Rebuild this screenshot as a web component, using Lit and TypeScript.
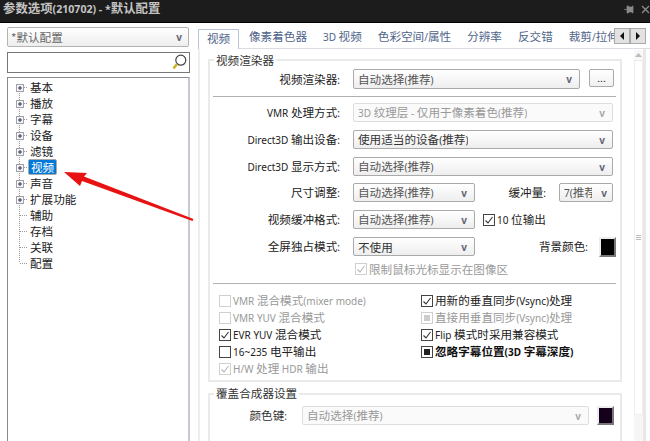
import { LitElement, html, css, svg } from "lit";
import { customElement } from "lit/decorators.js";

// Latin runs in the reference are visibly narrower than the CJK text beside them.
const t = (s: string) =>
  s.split(/([\x21-\x7e]+(?: [\x21-\x7e]+)*)/).map((p, i) => (i % 2 ? html`<span class="lat">${p}</span>` : p));

const TREE = [
  ["基本", 1], ["播放", 1], ["字幕", 1], ["设备", 1], ["滤镜", 1], ["视频", 1], ["声音", 1], ["扩展功能", 1],
  ["辅助", 0], ["存档", 0], ["关联", 0], ["配置", 0],
] as [string, number][];

const TABS = ["像素着色器", "3D 视频", "色彩空间/属性", "分辨率", "反交错", "裁剪/拉伸"];

const LEFT = [
  ["VMR 混合模式(mixer mode)", "off", true],
  ["VMR YUV 混合模式", "off", true],
  ["EVR YUV 混合模式", "on", false],
  ["16~235 电平输出", "off", false],
  ["H/W 处理 HDR 输出", "on", true],
] as [string, string, boolean][];

const RIGHT = [
  ["用新的垂直同步(Vsync)处理", "on", false, false],
  ["直接用垂直同步(Vsync)处理", "mixed", true, false],
  ["Flip 模式时采用兼容模式", "on", false, false],
  ["忽略字幕位置(3D 字幕深度)", "mixed", false, true],
] as [string, string, boolean, boolean][];

@customElement("app-root")
export class AppRoot extends LitElement {
  static styles = css`
    :host { display: block; width: 650px; height: 441px; overflow: hidden; position: relative; background: #fff;
      font: 11.6px/16px "Noto Sans CJK SC", "Noto Sans", sans-serif; color: #222; }
    .lat { font-family: "Noto Sans", sans-serif; font-size: 10px; }
    .title { background: #1c1c1c; border-bottom: 1px solid #000; display: flex; align-items: center;
      padding: 0 0 5px 3px; box-sizing: border-box; height: 23px; color: #c4c4c4; font-size: 12.4px; font-weight: 700;
      white-space: nowrap; }
    .title .lat { font-size: 10.6px; }
    .title .sp { flex: 1; }
    .title svg { display: block; }
    .main { display: flex; height: 418px; padding-top: 4px; }
    .left { width: 183px; margin-left: 7px; display: flex; flex-direction: column; flex: none; }
    .combo { height: 20px; border: 1px solid #b4b4b4; border-radius: 2px; background: linear-gradient(#fff, #eee);
      display: flex; align-items: center; box-sizing: border-box; padding: 0 6px 0 3px; color: #666; width: 182px; }
    .combo .sp { flex: 1; }
    .combo .v { font: 700 10px "Noto Sans", sans-serif; color: #667; }
    .search { height: 21px; margin-top: 5px; border: 1px solid #777; box-sizing: border-box; display: flex;
      justify-content: flex-end; align-items: center; padding-right: 2px; }
    .tree { flex: 1; margin-top: 4px; border-style: solid; border-color: #8a8a92 #c8c8d0 #c8c8d0 #8a8a92;
      border-width: 1px 2px 0 1px; padding-top: 1px; }
    .node { height: 16px; display: flex; align-items: center; }
    .node svg { flex: none; display: block; }
    .node span { padding: 0 2px; line-height: 15px; }
    .node .sel { background: #0078d7; color: #fff; display: block; }
    .right { flex: 1; margin-left: 8px; display: flex; flex-direction: column; min-width: 0; }
    .tabs { height: 21px; display: flex; align-items: flex-end; border-bottom: 1px solid #dcdce4; position: relative; }
    .tab0 { width: 41px; height: 20px; border: 1px solid #b9c4d8; border-bottom: 0; box-sizing: border-box;
      background: #fff; text-align: center; color: #50648a; line-height: 17px; margin-bottom: -1px; flex: none; }
    .tablist { display: flex; gap: 16px; margin-left: 10px; width: 365px; overflow: hidden; height: 20px;
      white-space: nowrap; color: #50648a; line-height: 17px; flex: none; }
    .tablist span { flex: none; }
    .arrows { display: flex; flex: none; align-self: flex-start; margin-top: 1px; }
    .arrows div { width: 16px; height: 16px; background: #e2e2e2; border: 1px solid #aaa; box-sizing: border-box;
      display: flex; align-items: center; justify-content: center; }
    .body { flex: 1; display: flex; border-left: 2px solid #eee; min-height: 0; }
    .page { width: 414px; margin-left: 8px; flex: none; }
    .group { border: 2px solid #eaeaea; padding: 0 4px 0 3px; box-sizing: border-box; }
    .g1 { margin-top: 10px; height: 323px; }
    .g2 { margin-top: 11px; height: 80px; }
    .legend { width: fit-content; background: #fff; margin: -9px 0 0 1px; padding: 0 2px; height: 16px; color: #333; }
    .g2 .legend { margin-top: -10px; }
    .row { height: 19px; display: flex; align-items: center; margin-top: 8px; }
    .row.first { margin-top: 1px; height: 20px; }
    .row.afterhr { margin-top: 6px; }
    .row.tight { margin-top: 7px; }
    .lbl { width: 127px; margin-right: 13px; text-align: right; flex: none; white-space: nowrap; color: #222; }
    .sel { height: 100%; box-sizing: border-box; border: 1px solid #aaa; border-radius: 2px;
      background: linear-gradient(#fff, #eee); display: flex; align-items: center; padding: 0 7px 0 4px; flex: none;
      color: #555; overflow: hidden; white-space: nowrap; justify-content: space-between; gap: 4px; }
    .sel .txt { overflow: hidden; min-width: 0; }
    .sel .v { font: 700 10px "Noto Sans", sans-serif; color: #667; flex: none; }
    .sel.dim { border-color: #dedede; background: #fafafa; color: #999; }
    .sel.dim .v { color: #aaa; }
    .sel.dark { color: #333; }
    .w260 { width: 260px; } .w227 { width: 227px; } .w122 { width: 122px; }
    .w54 { width: 54px; padding-right: 5px; gap: 9px; }
    .w287 { width: 287px; }
    .dots { width: 25px; height: 18px; margin-left: 9px; border: 1px solid #aaa; border-radius: 2px; box-sizing: border-box;
      background: linear-gradient(#fff, #f0f0f0); text-align: center; line-height: 16px; font-size: 10px; flex: none; align-self: flex-start; }
    .lbl2 { width: 71px; margin-right: 13px; text-align: right; flex: none; }
    .check { display: flex; align-items: center; gap: 2px; white-space: nowrap; }
    .check svg { flex: none; display: block; }
    .check.dis { color: #999; }
    .check.strong { font-weight: 700; color: #111; }
    .ten { margin-left: 8px; }
    .spacer { flex: 1; }
    .lbl3 { margin-right: 11px; }
    .swatch { width: 17px; height: 20px; box-sizing: border-box; border: 2px solid; border-color: #eee #777 #777 #eee;
      background: #000; flex: none; }
    .swatch.purple { background: #14001a; }
    .limit { margin: 5px 0 0 142px; height: 13px; }
    hr { border: 0; border-top: 1px solid #b0b0b0; margin: 7px 0 0; }
    .hr2 { margin-top: 9px; }
    .cols { display: grid; grid-template-columns: 202px 1fr; padding-left: 6px; margin-top: 8px; }
    .cols > div { display: flex; flex-direction: column; }
    .cols .check { height: 17px; }
    .g2 .lbl { width: 74px; margin-right: 15px; color: #333; }
    .g2 .row { margin-top: 5px; }
    .g2 .swatch { margin-left: 8px; height: 19px; }
    .scroll { width: 9px; margin-left: 12px; margin-top: 1px; flex: none; background: #f6f6f6; display: flex; flex-direction: column; }
    .up { height: 10px; background: #f8f8f8; display: flex; align-items: center; justify-content: center; border-bottom: 1px solid #eaeaea; }
    .thumb { height: 353px; background: #fff; border: 1px solid #eee; border-width: 0 1px 1px; display: flex; align-items: center; justify-content: center; }
    .strip { width: 3px; background: #e8e8e8; flex: none; }
    .arrow { position: absolute; left: 60px; top: 168px; pointer-events: none; }
  `;

  box(state: string, dis: boolean) {
    const b = dis ? "#d0d0d0" : "#444";
    const m = dis ? "#b5b5b5" : "#333";
    return svg`<svg width="12" height="12" viewBox="0 0 12 12" xmlns="http://www.w3.org/2000/svg">
      <rect x=".5" y=".5" width="11" height="11" fill="#fff" stroke=${b}/>
      ${state === "on" ? svg`<path d="M2.5 6.5 5 9 9.5 3" fill="none" stroke=${m} stroke-width="1.1"/>` : ""}
      ${state === "mixed" ? svg`<rect x="3" y="3" width="6" height="6" fill=${dis ? "#ccc" : "#222"}/>` : ""}
    </svg>`;
  }

  node(label: string, plus: number, i: number) {
    const last = i === TREE.length - 1;
    return html`<div class="node">
      <svg width="20" height="16" viewBox="0 0 20 16">
        <path d="M11.5 ${i === 0 ? 8 : 0}V${last ? 8 : 16}" stroke="#999" stroke-dasharray="1 1" fill="none" />
        <path d="M${plus ? 16 : 12} 8.5H20" stroke="#999" stroke-dasharray="1 1" fill="none" />
        ${plus
          ? svg`<rect x="8.5" y="5.5" width="7" height="7" fill="#f4f4fa" stroke="#a0a0a8"/>
              <path d="M10 9H14M12 7V11" stroke="#334" fill="none"/>`
          : ""}
      </svg>
      <span class=${label === "视频" ? "sel" : ""}>${label}</span>
    </div>`;
  }

  select(text: string, cls: string) {
    return html`<div class="sel ${cls}"><span class="txt">${t(text)}</span><span class="v">v</span></div>`;
  }

  check(text: string, state: string, dis = false, strong = false, extra = "") {
    return html`<div class="check ${dis ? "dis" : ""} ${strong ? "strong" : ""} ${extra}">${this.box(state, dis)}<span>${t(text)}</span></div>`;
  }

  render() {
    return html`
      <div class="title">
        <span>${t("参数选项(210702) - *默认配置")}</span>
        <span class="sp"></span>
        <svg width="27" height="12" viewBox="0 0 27 12" style="margin-top:2px">
          <path d="M1 5.5H4M4 2H5.5V9H4ZM5.5 3H9.5V8H5.5ZM9.5 2H10V9H9.5Z" fill="#8a8a8a" stroke="#8a8a8a" stroke-width=".7"/>
          <path d="M19 2 26 9M26 2 19 9" stroke="#8a8a8a" stroke-width="1.4"/>
        </svg>
      </div>
      <div class="main">
        <div class="left">
          <div class="combo"><span>*默认配置</span><span class="sp"></span><span class="v">v</span></div>
          <div class="search">
            <svg width="15" height="17" viewBox="0 0 15 17">
              <circle cx="8.8" cy="6.2" r="5" fill="#fff" stroke="#444" stroke-width="1.2"/>
              <path d="M5 10 1.5 14.5" stroke="#c8b020" stroke-width="2.4"/>
            </svg>
          </div>
          <div class="tree">${TREE.map(([l, p], i) => this.node(l, p, i))}</div>
        </div>
        <div class="right">
          <div class="tabs">
            <div class="tab0">视频</div>
            <div class="tablist">${TABS.map((x) => html`<span>${t(x)}</span>`)}</div>
            <div class="arrows">
              <div><svg width="6" height="8"><path d="M5 0V8L1 4Z" fill="#111"/></svg></div>
              <div><svg width="6" height="8"><path d="M1 0V8L5 4Z" fill="#111"/></svg></div>
            </div>
          </div>
          <div class="body">
            <div class="page">
              <div class="group g1">
                <div class="legend">视频渲染器</div>
                <div class="row first">
                  <div class="lbl">${t("视频渲染器: ")}</div>
                  ${this.select("自动选择(推荐)", "w227")}
                  <div class="dots">...</div>
                </div>
                <hr />
                <div class="row afterhr"><div class="lbl">${t("VMR 处理方式: ")}</div>${this.select("3D 纹理层 - 仅用于像素着色(推荐)", "w260 dim")}</div>
                <div class="row"><div class="lbl">${t("Direct3D 输出设备: ")}</div>${this.select("使用适当的设备(推荐)", "w260 dark")}</div>
                <div class="row"><div class="lbl">${t("Direct3D 显示方式: ")}</div>${this.select("自动选择(推荐)", "w260")}</div>
                <div class="row tight">
                  <div class="lbl">${t("尺寸调整: ")}</div>${this.select("自动选择(推荐)", "w122")}
                  <div class="lbl2">${t("缓冲量: ")}</div>${this.select("7(推荐", "w54")}
                </div>
                <div class="row">
                  <div class="lbl">${t("视频缓冲格式: ")}</div>${this.select("自动选择(推荐)", "w122")}
                  ${this.check("10 位输出", "on", false, false, "ten")}
                </div>
                <div class="row">
                  <div class="lbl">${t("全屏独占模式: ")}</div>${this.select("不使用", "w122 dark")}
                  <span class="spacer"></span><span class="lbl3">${t("背景颜色: ")}</span><div class="swatch"></div>
                </div>
                <div class="limit">${this.check("限制鼠标光标显示在图像区", "on", true)}</div>
                <hr class="hr2" />
                <div class="cols">
                  <div>${LEFT.map(([x, s, d]) => this.check(x, s, d))}</div>
                  <div>${RIGHT.map(([x, s, d, b]) => this.check(x, s, d, b))}</div>
                </div>
              </div>
              <div class="group g2">
                <div class="legend">覆盖合成器设置</div>
                <div class="row">
                  <div class="lbl">${t("颜色键: ")}</div>${this.select("自动选择(推荐)", "w287 dim")}
                  <div class="swatch purple"></div>
                </div>
              </div>
            </div>
            <div class="scroll">
              <div class="up"><svg width="7" height="4"><path d="M0 4H7L3.5 0Z" fill="#bbb"/></svg></div>
              <div class="thumb"><svg width="5" height="5"><path d="M0 .5H5M0 2.5H5M0 4.5H5" stroke="#bbb"/></svg></div>
            </div>
            <div class="strip"></div>
          </div>
        </div>
      </div>
      <svg class="arrow" width="136" height="56" viewBox="60 168 136 56">
        <path d="M64 172 87 173 84 176.5 193.5 219 192.5 221 82 181 80 186Z" fill="#e81212"/>
      </svg>
    `;
  }
}
